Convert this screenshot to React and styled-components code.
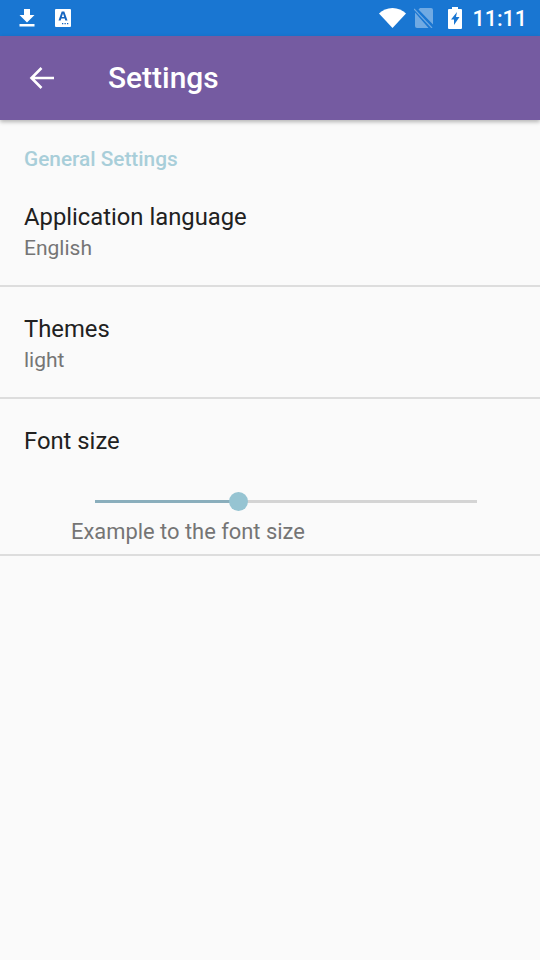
import React from 'react'
import styled, { createGlobalStyle } from 'styled-components'

const GlobalStyle = createGlobalStyle`
  html, body {
    margin: 0;
    padding: 0;
    background: #fafafa;
    font-family: Roboto, "Liberation Sans", sans-serif;
  }
`

const Page = styled.div`
  width: 540px;
  height: 960px;
  background: #fafafa;
  overflow: hidden;
`

const StatusBar = styled.div`
  height: 36px;
  background: #1976d2;
  display: flex;
  align-items: center;
  padding: 0 13px 0 18px;
  box-sizing: border-box;
  color: #fff;
`

const StatusLeft = styled.div`
  display: flex;
  align-items: center;
  gap: 19px;
`

const StatusRight = styled.div`
  margin-left: auto;
  display: flex;
  align-items: center;
`

const Clock = styled.span`
  font-size: 21.5px;
  font-weight: 500;
  margin-left: 10px;
`

const SimIcon = styled.svg`
  margin-left: 8px;
`

const BatteryIcon = styled.svg`
  margin-left: 15px;
`

const AppBar = styled.header`
  height: 84px;
  background: #755ba1;
  display: flex;
  align-items: center;
  padding-left: 29px;
  box-shadow: 0 2px 4px rgba(0, 0, 0, 0.28);
  position: relative;
`

const BackButton = styled.svg`
  display: block;
  margin-top: -1px;
`

const Title = styled.h1`
  margin: 0 0 0 53px;
  font-size: 29.9px;
  font-weight: 500;
  color: #fff;
  position: relative;
  top: -1px;
`

const SectionLabel = styled.div`
  padding: 28px 24px 0;
  font-size: 20.8px;
  line-height: 23px;
  font-weight: 500;
  color: #a8ced9;
`

const Row = styled.div`
  padding: ${p => p.$top}px 24px 0;
  height: ${p => p.$height}px;
  box-sizing: border-box;
  border-bottom: 2px solid #dddddd;
`

const RowTitle = styled.div`
  font-size: 23.8px;
  line-height: 28px;
  color: #212121;
`

const RowValue = styled.div`
  font-size: 21px;
  line-height: 24px;
  margin-top: 5px;
  color: #757575;
`

const SliderTrack = styled.div`
  position: relative;
  height: 3px;
  margin: 45px 39px 0 71px;
  background: #d4d4d4;
`

const SliderFill = styled.div`
  height: 100%;
  background: #8aaebc;
`

const SliderThumb = styled.div`
  position: absolute;
  top: -8px;
  width: 19px;
  height: 19px;
  margin-left: -9.5px;
  border-radius: 50%;
  background: #96c4d2;
`

const Example = styled.div`
  margin: 16px 0 0 47px;
  font-size: 21.9px;
  line-height: 26px;
  color: #757575;
`

const DownloadIcon = () => (
  <svg width="18" height="18" viewBox="0 0 18 18">
    <path fill="#fff" d="M6 0h6v6h4.500L9 13.500 1.500 6H6zM1.500 15h15v2.500h-15z" />
  </svg>
)

const TranslateIcon = () => (
  <svg width="16" height="18" viewBox="0 0 16 18">
    <rect width="16" height="18" rx="1" fill="#fff" />
    <path fill="#1565c0" d="M6.700 2.500h2.600l3.200 9h-2.200l-.6-1.900H6.300l-.6 1.900H3.500zM6.800 8h2.400L8 4.400z" />
    <path fill="#1565c0" d="M7 14h1.300v1.300H7zM9.500 14h1.300v1.300H9.500zM12 14h1.300v1.300H12z" />
  </svg>
)

const WifiIcon = () => (
  <svg width="27" height="20" viewBox="0 0 27 20">
    <path fill="#fff" d="M0 5.500C3.500 2.200 8.200 0 13.500 0S23.500 2.200 27 5.500L13.500 20z" />
  </svg>
)

const NoSimIcon = () => (
  <SimIcon width="19" height="20" viewBox="0 0 19 20">
    <path fill="#fff" fillOpacity="0.38" d="M6 0h11a2 2 0 0 1 2 2v14.500L4.500 1.500zM1 4.500L14.500 20H3a2 2 0 0 1-2-2z" />
    <path stroke="#fff" strokeOpacity="0.38" strokeWidth="1.200" d="M0 1l18 19" />
  </SimIcon>
)

const BatteryChargingIcon = () => (
  <BatteryIcon width="14" height="22" viewBox="0 0 14 22">
    <path fill="#fff" d="M4 0h6v2h3a1 1 0 0 1 1 1v18a1 1 0 0 1-1 1H1a1 1 0 0 1-1-1V3a1 1 0 0 1 1-1h3z" />
    <path fill="#1976d2" d="M9 5L3 12.500H6V18L11.500 10H8z" />
  </BatteryIcon>
)

const BackArrow = () => (
  <BackButton width="26" height="24" viewBox="0 0 26 24">
    <path fill="none" stroke="#fff" strokeWidth="2.600" d="M25 12H3M12.500 2L2.500 12l10 10" />
  </BackButton>
)

export default function App() {
  return (
    <Page>
      <GlobalStyle />
      <StatusBar>
        <StatusLeft>
          <DownloadIcon />
          <TranslateIcon />
        </StatusLeft>
        <StatusRight>
          <WifiIcon />
          <NoSimIcon />
          <BatteryChargingIcon />
          <Clock>11:11</Clock>
        </StatusRight>
      </StatusBar>
      <AppBar>
        <BackArrow />
        <Title>Settings</Title>
      </AppBar>
      <SectionLabel>General Settings</SectionLabel>
      <Row $top={32} $height={116}>
        <RowTitle>Application language</RowTitle>
        <RowValue>English</RowValue>
      </Row>
      <Row $top={28} $height={112}>
        <RowTitle>Themes</RowTitle>
        <RowValue>light</RowValue>
      </Row>
      <Row $top={28} $height={157}>
        <RowTitle>Font size</RowTitle>
        <SliderTrack>
          <SliderFill style={{ width: '36%' }} />
          <SliderThumb style={{ left: '37.5%' }} />
        </SliderTrack>
        <Example>Example to the font size</Example>
      </Row>
    </Page>
  )
}
